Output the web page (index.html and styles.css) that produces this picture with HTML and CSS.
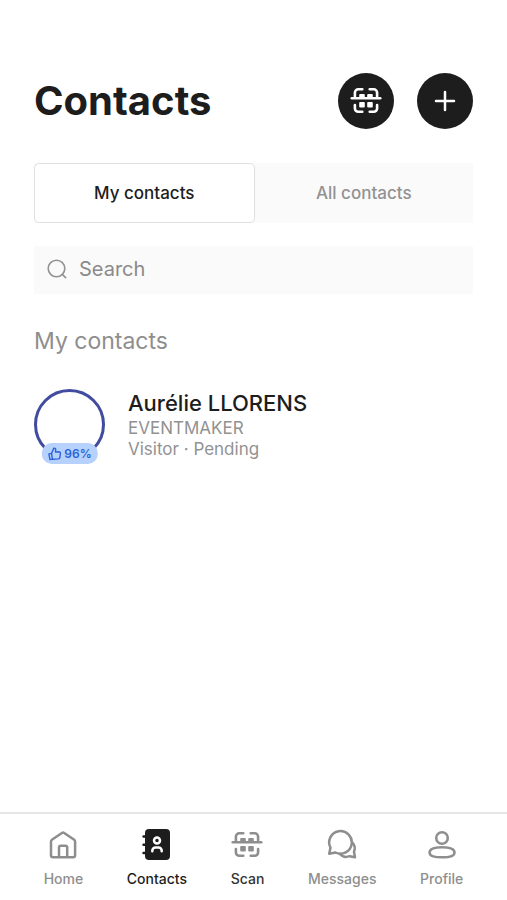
FILE: index.html
```html
<!DOCTYPE html>
<html lang="en">
<head>
  <meta charset="UTF-8" />
  <meta name="viewport" content="width=device-width, initial-scale=1" />
  <title>Contacts</title>
  <link rel="stylesheet" href="styles.css">
</head>
<body>
  <!-- Shared icon, used in the header and in the tab bar -->
  <svg class="sprite" aria-hidden="true">
    <symbol id="icon-scan" viewBox="0 0 32 28">
      <g fill="none" stroke="currentColor" stroke-width="2.6" stroke-linecap="round">
        <path d="M1.8 11.2h28.4" />
        <path d="M4.9 9.500V5.700a3.400 3.400 0 0 1 3.400-3.400h4M19.700 2.300h4a3.400 3.400 0 0 1 3.400 3.400v3.800M4.900 18v3.400a3.400 3.400 0 0 0 3.400 3.400h4M19.700 24.800h4a3.400 3.400 0 0 0 3.400-3.400V18" />
      </g>
      <path fill="currentColor" d="M9.2 11V8a1 1 0 0 1 1-1h3.600a1 1 0 0 1 1 1v3zM17.2 11V8a1 1 0 0 1 1-1h3.600a1 1 0 0 1 1 1v3z" />
      <rect x="9.2" y="15" width="5.6" height="5.6" rx="1" fill="currentColor" />
      <rect x="17.2" y="15" width="5.6" height="5.6" rx="1" fill="currentColor" />
    </symbol>
  </svg>

  <main class="content">
    <header class="header">
      <h1>Contacts</h1>
      <div class="actions">
        <button type="button" class="round-btn" aria-label="Scan a badge">
          <svg width="32" height="28"><use href="#icon-scan" /></svg>
        </button>
        <button type="button" class="round-btn" aria-label="Add a contact">
          <svg width="24" height="24" viewBox="0 0 24 24" fill="none" stroke="currentColor" stroke-width="2.5" stroke-linecap="round"><path d="M12 3v18M3 12h18" /></svg>
        </button>
      </div>
    </header>

    <div class="tabs">
      <button type="button" class="tab selected">My contacts</button>
      <button type="button" class="tab">All contacts</button>
    </div>

    <label class="search">
      <svg width="20" height="20" viewBox="0 0 20 20" fill="none" stroke="currentColor" stroke-width="1.6" stroke-linecap="round"><circle cx="9.5" cy="9.5" r="8.3" /><path d="M15.600 15.600l3 3" /></svg>
      <input type="search" placeholder="Search" aria-label="Search" />
    </label>

    <h2>My contacts</h2>

    <article class="contact">
      <div class="avatar">
        <span class="match">
          <svg width="14" height="14" viewBox="0 0 14 14" fill="none" stroke="currentColor" stroke-width="1.4" stroke-linejoin="round"><path d="M1.100 6.900l2.600-.5.9 5.700-2.500.4zM3.700 6.600L6 1.200c1.300-.2 2 .6 1.900 1.800L7.700 5.100l3.300-.3c1 0 1.700.7 1.600 1.600l-.5 4c-.1.900-.7 1.400-1.500 1.500l-6 .4" /></svg>
          96%
        </span>
      </div>
      <div class="info">
        <h3>Aurélie LLORENS</h3>
        <p>EVENTMAKER</p>
        <p>Visitor · Pending</p>
      </div>
    </article>
  </main>

  <nav class="tabbar">
    <a href="#home">
      <svg width="32" height="32" viewBox="0 0 32 32" fill="none" stroke="currentColor" stroke-width="2.5" stroke-linejoin="round"><path d="M4 12.500a2 2 0 0 1 .9-1.700L14.900 4a2 2 0 0 1 2.300 0l10 6.800a2 2 0 0 1 .9 1.700v13.700a2 2 0 0 1-2 2H6a2 2 0 0 1-2-2z" /><path d="M12 28V18.500a1.800 1.800 0 0 1 1.800-1.800h4.600a1.800 1.800 0 0 1 1.800 1.800V28" /></svg>
      Home
    </a>
    <a href="#contacts" class="active">
      <svg width="32" height="32" viewBox="0 0 32 32" fill="none" stroke="currentColor" stroke-linecap="round">
        <rect x="4" y="0" width="25" height="31" rx="4" fill="currentColor" stroke="none" />
        <path stroke-width="2.4" d="M2.500 7.500h4M2.500 15.800h4M2.500 24h4" />
        <g stroke="#fff" stroke-width="2.5"><circle cx="16" cy="11.500" r="3" /><path d="M11.300 22.300v-.6a3.200 3.200 0 0 1 3.200-3.200h3a3.200 3.200 0 0 1 3.200 3.200v.6" /></g>
      </svg>
      Contacts
    </a>
    <a href="#scan" class="scan">
      <svg width="32" height="32"><use href="#icon-scan" /></svg>
      Scan
    </a>
    <a href="#messages">
      <svg width="32" height="32" viewBox="0 0 32 32" fill="none" stroke="currentColor" stroke-width="2.5" stroke-linejoin="round"><path d="M3.200 24.700l1.300-6A11.300 11.300 0 1 1 9.400 23.500z" /><path d="M25.500 12.800A9 9 0 0 1 28 23l1 5.300-5.400-1.100a9 9 0 0 1-10.300-2.900" /></svg>
      Messages
    </a>
    <a href="#profile">
      <svg width="32" height="32" viewBox="0 0 32 32" fill="none" stroke="currentColor" stroke-width="2.5"><circle cx="16" cy="9" r="5.800" /><path d="M3.600 23.700C3.600 20 9 18.300 16 18.300s12.500 1.700 12.500 5.400S23 28.300 16 28.300 3.600 27.400 3.600 23.700z" /></svg>
      Profile
    </a>
  </nav>
</body>
</html>
```
FILE: styles.css
```css
* {
  box-sizing: border-box;
}

body {
  display: flex;
  flex-direction: column;
  min-height: 100vh;
  margin: 0;
  font-family: Inter, sans-serif;
  color: #1d1d1d;
  background: #fff;
}

h1, h2, h3, p {
  margin: 0;
}

button {
  padding: 0;
  border: 0;
  font: inherit;
  cursor: pointer;
}

svg {
  display: block;
  flex-shrink: 0;
}

.sprite {
  position: absolute;
  width: 0;
  height: 0;
}

.content {
  flex: 1;
  padding: 73px 34px 24px;
}

.header {
  display: flex;
  justify-content: space-between;
  align-items: center;
  margin-bottom: 34px;
}

h1 {
  font-size: 40px;
  line-height: 56px;
  font-weight: 700;
}

.actions {
  display: flex;
  gap: 23px;
}

.round-btn {
  display: flex;
  align-items: center;
  justify-content: center;
  width: 56px;
  height: 56px;
  border-radius: 50%;
  color: #fff;
  background: #1d1d1d;
}

.tabs {
  display: flex;
  height: 60px;
  margin-bottom: 23px;
  background: #fafafa;
}

.tab {
  flex: 1;
  font-size: 17px;
  font-weight: 500;
  color: #929292;
  background: none;
}

.tab.selected {
  border: 1px solid #e0e0e0;
  border-radius: 5px;
  color: #1d1d1d;
  background: #fff;
}

.search {
  display: flex;
  align-items: center;
  gap: 12px;
  height: 48px;
  margin-bottom: 32px;
  padding: 0 13px 2px;
  color: #929292;
  background: #fafafa;
}

.search input {
  flex: 1;
  min-width: 0;
  padding: 0;
  border: 0;
  outline: none;
  font: inherit;
  font-size: 20px;
  background: none;
}

.search input::placeholder {
  color: #8a8a8a;
}

h2 {
  margin-bottom: 33px;
  font-size: 23px;
  line-height: 30px;
  font-weight: 400;
  color: #8e8e8e;
}

.contact {
  display: flex;
  gap: 23px;
}

.avatar {
  position: relative;
  width: 71px;
  height: 71px;
  border: 3px solid #414ba0;
  border-radius: 50%;
}

.match {
  position: absolute;
  bottom: -7px;
  left: 50%;
  transform: translateX(-50%);
  display: flex;
  align-items: center;
  gap: 3px;
  height: 21px;
  padding: 0 6px;
  border-radius: 10px;
  font-size: 12px;
  font-weight: 600;
  color: #2b63d6;
  background: #b5d1fc;
}

h3 {
  font-size: 22px;
  line-height: 29px;
  font-weight: 500;
}

.info p {
  font-size: 17px;
  line-height: 21px;
  color: #929292;
}

.tabbar {
  display: flex;
  justify-content: space-evenly;
  padding: 15px 0 11px;
  border-top: 2px solid #e6e6e6;
}

.tabbar a {
  display: flex;
  flex-direction: column;
  align-items: center;
  gap: 8px;
  font-size: 14px;
  line-height: 20px;
  font-weight: 500;
  color: #8e8e8e;
  text-decoration: none;
}

.tabbar .active {
  color: #1d1d1d;
}

.tabbar .scan {
  color: #333;
}

.tabbar .scan svg {
  color: #8e8e8e;
}
```
